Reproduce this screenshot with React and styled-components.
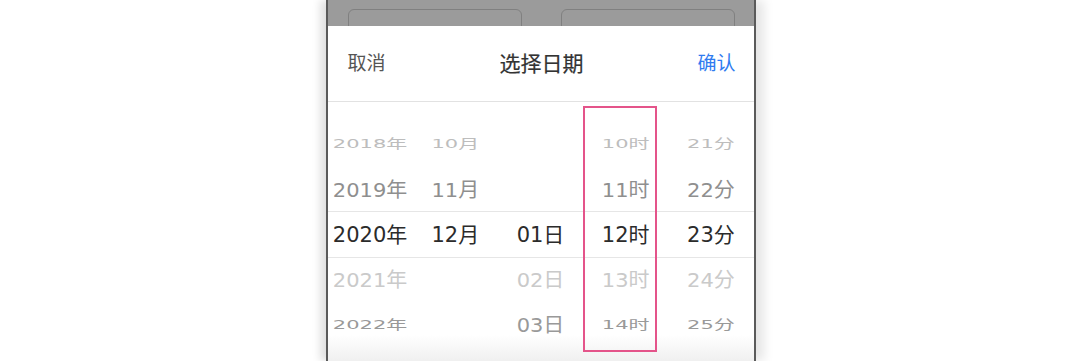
import React from "react";
import styled, { createGlobalStyle } from "styled-components";

const GlobalStyle = createGlobalStyle`
  html, body {
    margin: 0;
    padding: 0;
    background: #ffffff;
  }
  body {
    font-family: "DejaVu Sans", "Noto Sans CJK SC", sans-serif;
  }
`;

// row tones: 1 faded + squashed, 2 mid, 3 selected, 4 faded, 5 mid + squashed
const tones = {
  far: { color: "#bdbdbd", scale: 0.6 },
  near: { color: "#8f8f8f", scale: 0.95 },
  active: { color: "#2b2b2b", scale: 1 },
  fade: { color: "#cacaca", scale: 0.95 },
  bottom: { color: "#999999", scale: 0.62 },
  lower: { color: "#999999", scale: 0.95 },
};
const toneOrder = ["far", "near", "active", "fade", "bottom"];

const columns = [
  { items: ["2018年", "2019年", "2020年", "2021年", "2022年"] },
  { items: ["10月", "11月", "12月", "", ""] },
  { items: ["", "", "01日", "02日", "03日"], last: "lower" },
  { items: ["10时", "11时", "12时", "13时", "14时"] },
  { items: ["21分", "22分", "23分", "24分", "25分"] },
];

function App() {
  return (
    <>
      <GlobalStyle />
      <Page>
        <Phone>
          <Backdrop>
            <GhostInput />
            <GhostInput />
          </Backdrop>
          <Sheet>
            <Header>
              <TextButton>取消</TextButton>
              <Title>选择日期</Title>
              <TextButton $primary>确认</TextButton>
            </Header>
            <Picker>
              <SelectedBand />
              <Wheels>
                {columns.map((col, ci) => (
                  <Wheel key={ci}>
                    {col.items.map((label, ri) => (
                      <Cell
                        key={ri}
                        $tone={ri === 4 && col.last ? col.last : toneOrder[ri]}
                      >
                        {label && <span>{label}</span>}
                      </Cell>
                    ))}
                  </Wheel>
                ))}
              </Wheels>
              <BottomFade />
              <Highlight />
            </Picker>
          </Sheet>
        </Phone>
      </Page>
    </>
  );
}

const Page = styled.div`
  width: 1080px;
  height: 361px;
  display: flex;
  justify-content: center;
  overflow: hidden;
`;

const Phone = styled.div`
  width: 426px;
  height: 361px;
  margin-left: 1px;
  display: flex;
  flex-direction: column;
  border-left: 2px solid #5a5a5a;
  border-right: 2px solid #5a5a5a;
  box-shadow: -6px 0 8px rgba(0, 0, 0, 0.12), 8px 0 10px rgba(0, 0, 0, 0.1);
  background: #fff;
`;

const Backdrop = styled.div`
  height: 26px;
  background: #9b9b9b;
  display: flex;
  gap: 39px;
  padding: 9px 19px 0 20px;
  box-sizing: border-box;
  overflow: hidden;
`;

const GhostInput = styled.div`
  flex: 1;
  height: 40px;
  border: 1px solid #808080;
  border-radius: 6px;
  box-sizing: border-box;
`;

const Sheet = styled.div`
  flex: 1;
  display: flex;
  flex-direction: column;
  background: #fff;
`;

const Header = styled.div`
  height: 76px;
  display: flex;
  align-items: center;
  justify-content: space-between;
  padding: 0 18px 4px 20px;
  box-sizing: border-box;
  border-bottom: 1px solid #e2e2e2;
`;

const TextButton = styled.span`
  font-size: 19px;
  color: ${(p) => (p.$primary ? "#2f7bf0" : "#555555")};
`;

const Title = styled.span`
  font-size: 21px;
  color: #333333;
  -webkit-text-stroke: 0.2px #333333;
`;

const Picker = styled.div`
  position: relative;
  flex: 1;
  padding-top: 18px;
`;

const Wheels = styled.div`
  display: grid;
  grid-template-columns: repeat(5, 1fr);
`;

const Wheel = styled.div`
  display: flex;
  flex-direction: column;
`;

const Cell = styled.div`
  height: 45px;
  display: flex;
  align-items: center;
  justify-content: center;
  font-size: 21px;
  color: ${(p) => tones[p.$tone].color};

  span {
    display: inline-block;
    transform: scaleY(${(p) => tones[p.$tone].scale});
  }
`;

const SelectedBand = styled.div`
  position: absolute;
  left: 0;
  right: 0;
  top: 109px;
  height: 45px;
  border-top: 1px solid #e6e6e6;
  border-bottom: 1px solid #e6e6e6;
`;

const Highlight = styled.div`
  position: absolute;
  left: 255px;
  top: 4px;
  width: 74px;
  height: 246px;
  border: 2px solid #e4548a;
  box-sizing: border-box;
`;

const BottomFade = styled.div`
  position: absolute;
  left: 0;
  right: 0;
  bottom: 0;
  height: 26px;
  background: linear-gradient(rgba(240, 240, 240, 0), rgba(238, 238, 238, 0.9));
  pointer-events: none;
`;

export default App;
